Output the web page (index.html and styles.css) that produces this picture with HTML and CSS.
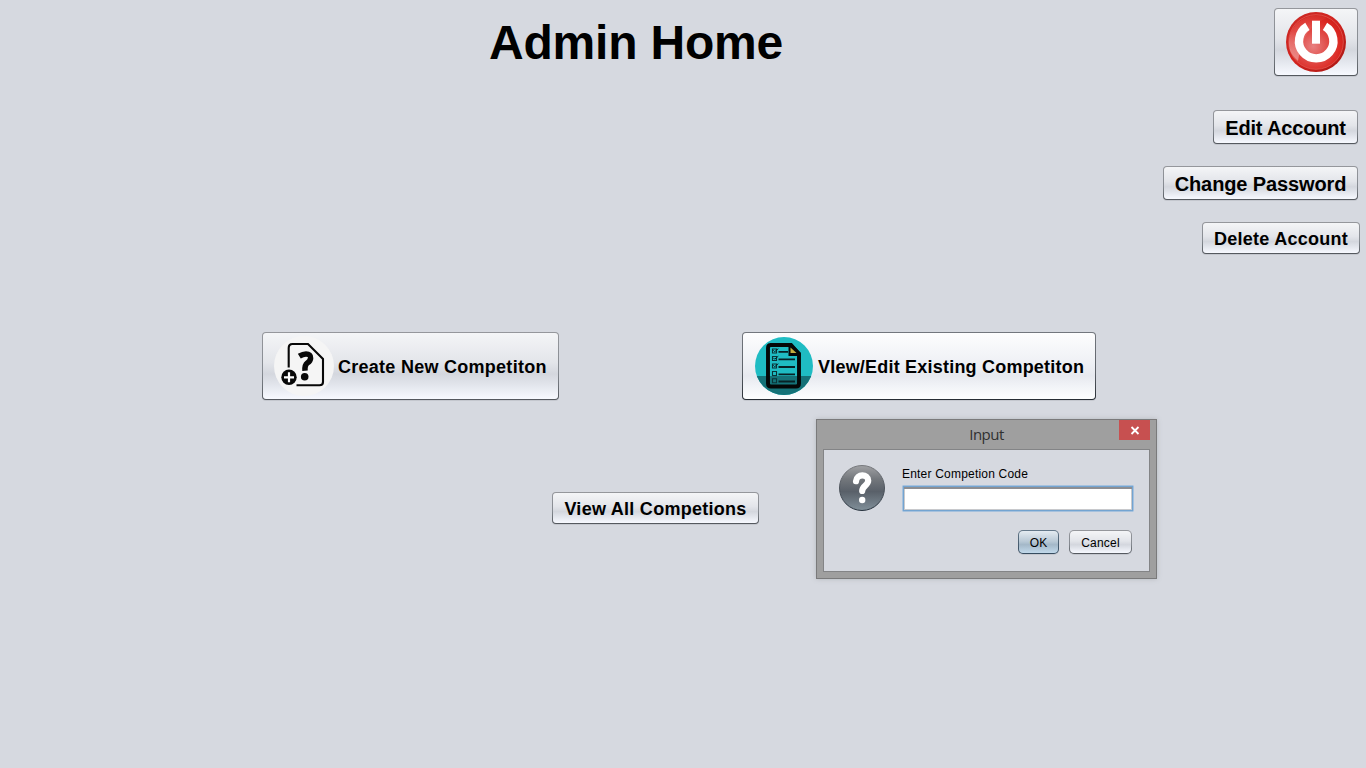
FILE: index.html
```html
<!DOCTYPE html>
<html lang="en">
<head>
<meta charset="utf-8">
<title>Admin Home</title>
<link rel="stylesheet" href="styles.css">
</head>
<body>
<main class="page">
  <header class="top">
    <h1 class="title">Admin Home</h1>
    <nav class="account">
      <button class="btn btn-power" aria-label="Log out">
        <svg width="62" height="62" viewBox="0 0 62 62">
          <defs>
            <linearGradient id="rim" x1="0" y1="0" x2="1" y2="1"><stop offset="0" stop-color="#ca2a26"/><stop offset=".5" stop-color="#d3231e"/><stop offset="1" stop-color="#a51613"/></linearGradient>
            <radialGradient id="face" cx=".45" cy=".58" r=".6"><stop offset="0" stop-color="#e88080"/><stop offset=".45" stop-color="#e04b47"/><stop offset=".8" stop-color="#dc2a24"/><stop offset="1" stop-color="#d0211b"/></radialGradient>
            <linearGradient id="shine" x1="0" y1="1" x2="1" y2="0"><stop offset="0" stop-color="#fff" stop-opacity=".5"/><stop offset=".4" stop-color="#fff" stop-opacity=".12"/><stop offset="1" stop-color="#fff" stop-opacity=".03"/></linearGradient>
          </defs>
          <circle cx="31" cy="31" r="30" fill="url(#rim)"/>
          <circle cx="31" cy="31" r="27.3" fill="url(#face)" stroke="#e0564f" stroke-width=".8"/>
          <path d="M5 39A27 27 0 0 1 42 7Q18 15 13 50Q7 45 5 39Z" fill="url(#shine)"/>
          <path d="M22.4 15.4A17.2 17.2 0 1 0 40 15.4" fill="none" stroke="#fff" stroke-width="8.4"/>
          <rect x="27" y="9.7" width="8" height="23" fill="#fff"/>
        </svg>
      </button>
      <button class="btn btn-edit">Edit Account</button>
      <button class="btn btn-password">Change Password</button>
      <button class="btn btn-delete">Delete Account</button>
    </nav>
  </header>
  <section class="actions">
    <button class="btn btn-create">
      <svg width="60" height="60" viewBox="0 0 60 60">
        <circle cx="30" cy="30" r="30" fill="#f5f5f5"/>
        <path d="M14.7 31.5V12Q14.7 8 18.5 8H34L49 23V46Q49 49.3 45.5 49.3H22.5" fill="none" stroke="#080808" stroke-width="2.1"/>
        <path d="M25.3 20.2Q29 17.9 32 17.9Q36.8 18 36.6 22Q36.5 25 33.3 27Q30.6 29 31 34.7" fill="none" stroke="#080808" stroke-width="5.5"/>
        <circle cx="30.7" cy="40.8" r="3.8" fill="#080808"/>
        <circle cx="15" cy="41.3" r="7.7" fill="#080808"/>
        <path d="M15 36.3v10M10 41.3h10" stroke="#fff" stroke-width="2.2"/>
      </svg>
      <span>Create New Competiton</span>
    </button>
    <button class="btn btn-existing">
      <svg width="60" height="60" viewBox="0 0 60 60">
        <clipPath id="disc"><circle cx="30" cy="30" r="29"/></clipPath>
        <g clip-path="url(#disc)"><path d="M0 0h60v60H0z" fill="#1fbcc3"/><path d="M0 40h60v20H0z" fill="#157278"/></g>
        <path d="M16 9H37L45 18V47.5Q45 50.5 42 50.5H17Q14 50.5 14 47.5V12Q14 9 17 9Z" fill="none" stroke="#050808" stroke-width="3.9"/>
        <path d="M34.5 8H38L46.5 16.5V20H34.5Z" fill="#050808"/>
        <path d="M36.5 11.5L42.5 17H36.5Z" fill="#c3ad3e"/>
        <path d="M24.5 15.8H34M24.5 23.3H41M24.5 31H41M24.5 38.3H41M24.5 45.5H41" stroke="#082226" stroke-width="1.8"/>
        <path d="M18.5 13h4v4h-4zM18.5 20.5h4v4h-4zM18.5 28h4v4h-4zM18.5 35.5h4v4h-4zM18.5 42.8h4v4h-4z" fill="none" stroke="#0a3438" stroke-width="1.1"/>
        <path d="M19.3 14.3l1.4 1.4 3.6-3M19.3 21.8l1.4 1.4 3.6-3M19.3 29.3l1.4 1.4 3.6-3" fill="none" stroke="#082226"/>
      </svg>
      <span>VIew/Edit Existing Competiton</span>
    </button>
  </section>
  <section class="all"><button class="btn btn-all">View All Competions</button></section>
</main>
<div class="dialog" role="dialog" aria-label="Input">
  <div class="titlebar">
    <span class="caption">Input</span>
    <button class="close" aria-label="Close"><svg width="31" height="20" viewBox="0 0 31 20"><path d="M12.5 7l7 7M19.5 7l-7 7" stroke="#fff" stroke-width="1.8"/></svg></button>
  </div>
  <div class="panel">
    <svg class="question" width="48" height="48" viewBox="0 0 48 48">
      <defs><linearGradient id="slate" x1="0" y1="0" x2="0" y2="1"><stop offset="0" stop-color="#a0a1a4"/><stop offset=".3" stop-color="#73777c"/><stop offset=".58" stop-color="#596069"/><stop offset="1" stop-color="#81909a"/></linearGradient>
      <linearGradient id="edge" x1="0" y1="0" x2="0" y2="1"><stop offset="0" stop-color="#77797d"/><stop offset="1" stop-color="#26313d"/></linearGradient></defs>
      <circle cx="24" cy="24" r="22.5" fill="url(#slate)" stroke="url(#edge)"/>
      <path d="M18 17.2C18.6 9.3 30.2 9.7 30.2 16.6C30.2 21.5 24.2 21.7 24.2 27" fill="none" stroke="#fff" stroke-width="6.2" stroke-linecap="round"/>
      <circle cx="24.2" cy="36" r="3.2" fill="#fff"/>
    </svg>
    <div class="form">
      <label class="label" for="code">Enter Competion Code</label>
      <input class="field" id="code" type="text">
      <div class="buttons">
        <button class="btn btn-small btn-ok">OK</button>
        <button class="btn btn-small btn-cancel">Cancel</button>
      </div>
    </div>
  </div>
</div>
</body>
</html>
```
FILE: styles.css
```css
* { box-sizing: border-box; }
body { margin: 0; background: #d6d9e0; color: #000; font-family: "Liberation Sans", Arial, sans-serif; overflow: hidden; }
.page { width: 1366px; height: 768px; display: flex; flex-direction: column; }
.top { height: 332px; display: flex; justify-content: space-between; align-items: flex-start; padding: 8px 6px 0 489px; }
.title { margin: 7px 0 0; font-size: 48px; line-height: 56px; letter-spacing: -0.2px; white-space: nowrap; }
.account { display: flex; flex-direction: column; align-items: flex-end; }
.btn {
  display: flex; align-items: center; justify-content: center; padding: 2px 0 0; margin: 0;
  border: 1px solid transparent; border-radius: 4px; white-space: nowrap;
  background: linear-gradient(#f4f5f7, #e3e5ea 45%, #d4d7de 62%, #dfe2e9 75%, #f7f9ff) padding-box,
              linear-gradient(#95979c, #858a91 60%, #53575d) border-box;
  box-shadow: 0 1px 0 #c4c7ce;
  color: #000; font: bold 18px "Liberation Sans", Arial, sans-serif; letter-spacing: .27px;
}
.btn svg { display: block; flex: none; }
.btn-power { width: 84px; height: 68px; margin: 0 2px 34px 0; padding: 0; }
.btn-edit { width: 145px; height: 34px; margin: 0 2px 22px 0; font-size: 20px; letter-spacing: -.17px; }
.btn-password { width: 195px; height: 34px; margin: 0 2px 22px 0; font-size: 20px; letter-spacing: -.12px; }
.btn-delete { width: 158px; height: 32px; }
.actions { display: flex; gap: 183px; padding-left: 262px; }
.btn-create, .btn-existing { height: 68px; justify-content: flex-start; padding: 0 0 0 11px; gap: 4px; }
.btn-create span, .btn-existing span { padding-top: 2px; }
.btn-create { width: 297px; }
.btn-existing {
  width: 354px; letter-spacing: .21px;
  background: linear-gradient(#fdfdfe, #eff1f5 45%, #e7e9ef 65%, #f1f3f7 80%, #fdfeff) padding-box,
              linear-gradient(#73777e, #5c6168 60%, #262c34) border-box;
}
.all { padding: 92px 0 0 552px; }
.btn-all { width: 207px; height: 32px; }
.dialog { position: absolute; left: 816px; top: 419px; width: 341px; height: 160px; border: 1px solid #7a7a7b; background: #9f9f9f; padding: 0 6px 6px; box-shadow: 0 0 5px #b5b8bd; }
.titlebar { height: 29px; display: grid; grid-template-columns: 31px 1fr 31px; }
.caption { grid-column: 2; text-align: center; font: 15px/29px "Open Sans", "Noto Sans", sans-serif; letter-spacing: -.5px; color: #303030; }
.close { width: 31px; height: 20px; padding: 0; border: 0; background: #c75050; }
.close svg { display: block; }
.panel { height: 123px; border: 1px solid #838486; background: #d6d9e0; display: flex; padding: 14px 15px 0 14px; gap: 14px; }
.question { flex: none; }
.form { flex: 1; padding: 2px 0 0 1px; display: flex; flex-direction: column; align-items: flex-start; }
.label { font-size: 12px; line-height: 16px; padding-left: 1px; letter-spacing: .2px; }
.field { width: 232px; height: 27px; margin: 3px 0 0 1px; padding: 0 6px; background: #fff; border: 1px solid #a6c1dd; outline: 0; border-radius: 1px; box-shadow: inset 0 0 0 1px #73a4d1, inset 0 3px #8d8e92, inset 0 0 0 2px #c8c9cc; }
.buttons { display: flex; gap: 10px; align-self: flex-end; margin: 18px 2px 0 0; }
.btn-small { height: 24px; padding: 1px 0 0; font-size: 12px; font-weight: normal; border-radius: 5px; letter-spacing: .2px; }
.btn-ok { width: 41px; background: linear-gradient(#e4ebf1, #b8c8d5 48%, #a4b8c8 62%, #c1d9eb) padding-box, linear-gradient(#65798a, #354b5e) border-box; }
.btn-cancel { width: 63px; }
```
